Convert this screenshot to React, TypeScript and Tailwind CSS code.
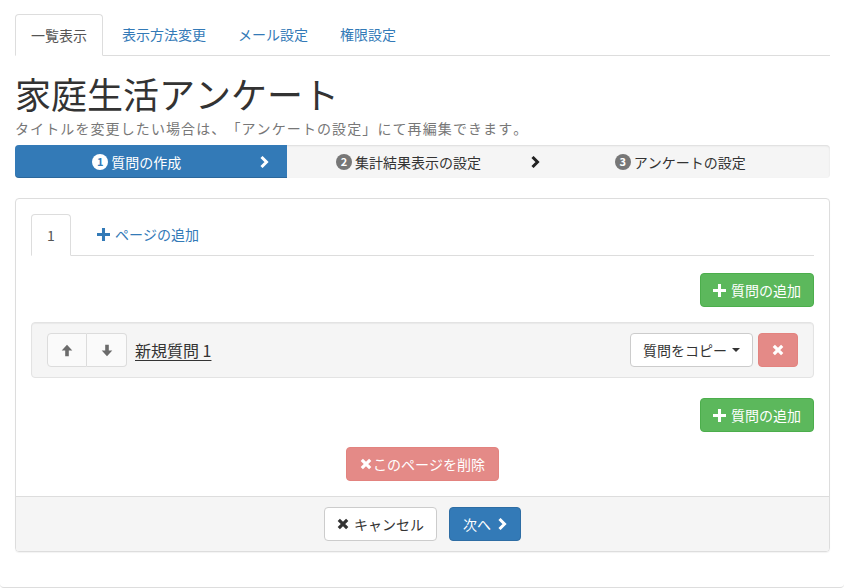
import React from "react";

const font = { fontFamily: '"Noto Sans CJK JP", "Liberation Sans", sans-serif' };

function PlusIcon({ className = "" }: { className?: string }) {
  return (
    <svg viewBox="0 0 12 12" className={className} fill="currentColor">
      <path d="M4.6 0h2.8v4.6H12v2.8H7.4V12H4.6V7.4H0V4.6h4.6z" />
    </svg>
  );
}

function RemoveIcon({ className = "" }: { className?: string }) {
  return (
    <svg viewBox="0 0 12 12" className={className} fill="none" stroke="currentColor" strokeWidth="3.2">
      <path d="M1.8 1.8L10.2 10.2M10.2 1.8L1.8 10.2" />
    </svg>
  );
}

function ChevronIcon({ className = "" }: { className?: string }) {
  return (
    <svg viewBox="0 0 10 12" className={className} fill="none" stroke="currentColor" strokeWidth="3">
      <path d="M2.5 1L7.5 6L2.5 11" />
    </svg>
  );
}

function ArrowIcon({ down = false }: { down?: boolean }) {
  return (
    <svg viewBox="0 0 12 12" className={"w-[12px] h-[13px] " + (down ? "rotate-180" : "")} fill="currentColor">
      <path d="M6 0.3L11.3 5.9H7.8V11.7H4.2V5.9H0.7Z" />
    </svg>
  );
}

function Step({ n, label, active, chevron, first, last }: { n: number; label: string; active?: boolean; chevron?: boolean; first?: boolean; last?: boolean }) {
  return (
    <div
      className={
        "flex-1 flex items-center h-full " +
        (active ? "bg-[#337ab7] text-white shadow-[inset_0_-1px_0_rgba(0,0,0,0.15)] " : "text-[#333] ") +
        (first ? "rounded-l-[4px] " : "") +
        (last ? "rounded-r-[4px] " : "")
      }
    >
      <div className="flex-1 flex items-center justify-center gap-[3px]">
        <span
          className={
            "w-[16px] h-[16px] rounded-full flex items-center justify-center text-[11px] font-bold leading-none " +
            (active ? "bg-white text-[#337ab7]" : "bg-[#777] text-white")
          }
        >
          {n}
        </span>
        <span className="text-[14px] leading-[20px]">{label}</span>
      </div>
      <div className="w-[28px] flex items-center">
        {chevron && <ChevronIcon className={"w-[10px] h-[12px] " + (active ? "text-white" : "text-[#222]")} />}
      </div>
    </div>
  );
}

export default function App() {
  return (
    <div style={font} className="w-full h-[588px] bg-white border-b border-[#ddd] rounded-b-[4px] pl-[15px] pr-[14px] pt-[14px] text-[14px] text-[#333] [text-spacing-trim:space-all] [font-kerning:none]">
      {/* top tabs */}
      <div className="flex border-b border-[#ddd] h-[42px]">
        <div className="px-[15px] h-[42px] leading-[40px] border border-[#ddd] border-b-white bg-white rounded-t-[4px] text-[#555] mr-[2px]">一覧表示</div>
        <div className="px-[15px] leading-[40px] text-[#337ab7] mr-[2px] ml-[2px]">表示方法変更</div>
        <div className="px-[15px] leading-[40px] text-[#337ab7] mr-[2px]">メール設定</div>
        <div className="px-[15px] leading-[40px] text-[#337ab7]">権限設定</div>
      </div>

      <h1 className="mt-[19px] text-[36px] leading-[36px] text-[#333] font-normal">家庭生活アンケート</h1>
      <p className="mt-[7px] text-[14px] leading-[20px] text-[#777] whitespace-nowrap tracking-[1.1px]">タイトルを変更したい場合は、「アンケートの設定」にて再編集できます。</p>

      {/* step bar */}
      <div className="mt-[7px] h-[33px] flex bg-[#f5f5f5] rounded-[4px] shadow-[inset_0_1px_2px_rgba(0,0,0,0.1)]">
        <Step n={1} label="質問の作成" active chevron first />
        <Step n={2} label="集計結果表示の設定" chevron />
        <Step n={3} label="アンケートの設定" last />
      </div>

      {/* panel */}
      <div className="mt-[20px] border border-[#ddd] rounded-[4px] shadow-[0_1px_1px_rgba(0,0,0,0.05)]">
        <div className="p-[15px]">
          <div className="flex border-b border-[#ddd] h-[42px]">
            <div className="w-[40px] h-[42px] leading-[40px] text-center border border-[#ddd] border-b-white bg-white rounded-t-[4px] text-[#555]">1</div>
            <div className="pl-[26px] pr-[15px] flex items-center gap-[5px] text-[#337ab7] h-[40px]">
              <PlusIcon className="w-[13px] h-[13px]" />
              <span>ページの追加</span>
            </div>
          </div>

          <div className="flex justify-end mt-[17px]">
            <button className="h-[34px] px-[12px] flex items-center gap-[5px] bg-[#5cb85c] border border-[#4cae4c] rounded-[4px] text-white">
              <PlusIcon className="w-[13px] h-[13px]" />
              <span>質問の追加</span>
            </button>
          </div>

          <div className="mt-[15px] bg-[#f5f5f5] border border-[#e3e3e3] rounded-[4px] px-[15px] py-[10px] flex items-center shadow-[inset_0_1px_1px_rgba(0,0,0,0.05)]">
            <button className="w-[40px] h-[34px] flex items-center justify-center bg-[#fafafa] border border-[#dcdcdc] rounded-l-[4px] text-[#6b6b6b]">
              <ArrowIcon />
            </button>
            <button className="w-[40px] h-[34px] flex items-center justify-center bg-[#fafafa] border border-l-0 border-[#dcdcdc] rounded-r-[4px] text-[#6b6b6b]">
              <ArrowIcon down />
            </button>
            <span className="ml-[8px] text-[16px] leading-[22px] underline underline-offset-[3px] text-[#333]">新規質問 1</span>
            <div className="flex-1" />
            <button className="h-[34px] px-[12px] flex items-center justify-center gap-[5px] bg-white border border-[#ccc] rounded-[4px] text-[#333] whitespace-nowrap">
              <span>質問をコピー</span>
              <span className="w-0 h-0 border-x-[4px] border-x-transparent border-t-[4px] border-t-[#333]" />
            </button>
            <button className="ml-[5px] w-[40px] h-[34px] flex items-center justify-center bg-[#e48a87] border border-[#e3837f] rounded-[4px] text-white">
              <RemoveIcon className="w-[12px] h-[12px]" />
            </button>
          </div>

          <div className="flex justify-end mt-[20px]">
            <button className="h-[34px] px-[12px] flex items-center gap-[5px] bg-[#5cb85c] border border-[#4cae4c] rounded-[4px] text-white">
              <PlusIcon className="w-[13px] h-[13px]" />
              <span>質問の追加</span>
            </button>
          </div>

          <div className="flex justify-center mt-[15px]">
            <button className="h-[34px] px-[13px] flex items-center gap-[1px] bg-[#e48a87] border border-[#e3837f] rounded-[4px] text-white">
              <RemoveIcon className="w-[12px] h-[12px]" />
              <span>このページを削除</span>
            </button>
          </div>
        </div>

        <div className="border-t border-[#ddd] bg-[#f5f5f5] rounded-b-[3px] px-[15px] py-[10px] flex justify-center gap-[12px]">
          <button className="h-[34px] px-[12px] flex items-center gap-[5px] bg-white border border-[#ccc] rounded-[4px] text-[#333]">
            <RemoveIcon className="w-[12px] h-[12px]" />
            <span>キャンセル</span>
          </button>
          <button className="h-[34px] px-[13px] flex items-center gap-[6px] bg-[#337ab7] border border-[#2e6da4] rounded-[4px] text-white">
            <span>次へ</span>
            <ChevronIcon className="w-[10px] h-[12px]" />
          </button>
        </div>
      </div>
    </div>
  );
}
